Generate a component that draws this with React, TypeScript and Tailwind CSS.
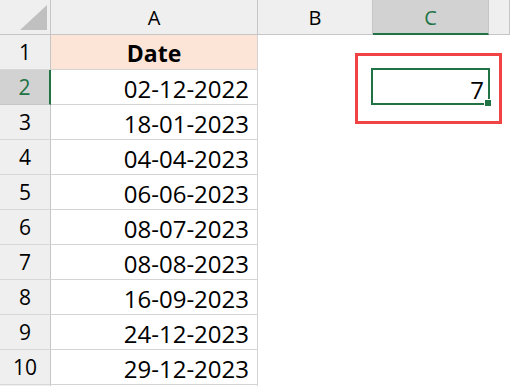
import React from "react";

const dates = [
  "02-12-2022",
  "18-01-2023",
  "04-04-2023",
  "06-06-2023",
  "08-07-2023",
  "08-08-2023",
  "16-09-2023",
  "24-12-2023",
  "29-12-2023",
];

const hdr = "bg-[#efefef] border-r border-b border-[#c6c6c6] flex items-end justify-center pb-[6px] text-[20px] leading-[20px] text-black";

export default function App() {
  const rows: React.ReactNode[] = [];
  for (let r = 1; r <= 11; r++) {
    const selected = r === 2;
    rows.push(
      <div
        key={`h${r}`}
        className={
          selected
            ? "bg-[#d2d2d2] border-b border-b-[#c6c6c6] border-r-2 border-r-[#217346] flex items-end justify-center pb-[6px] text-[21px] leading-[21px] text-[#217346]"
            : "bg-[#efefef] border-b border-b-[#d8d8d8] border-r border-r-[#c6c6c6] flex items-end justify-center pb-[6px] text-[21px] leading-[21px] text-black"
        }
      >
        {r <= 10 ? r : ""}
      </div>
    );
    if (r === 1) {
      rows.push(
        <div
          key={`a${r}`}
          className="bg-[#fce4d6] border-r border-b border-[#d4d4d4] flex items-end justify-center pb-[4px] text-[23px] leading-[24px] font-bold text-black"
        >
          Date
        </div>
      );
    } else if (r <= 10) {
      rows.push(
        <div
          key={`a${r}`}
          className="bg-white border-r border-b border-[#d4d4d4] flex items-end justify-end pr-[8px] pb-[3px] text-[24px] leading-[24px] text-black"
        >
          {dates[r - 2]}
        </div>
      );
    } else {
      rows.push(<div key={`a${r}`} className="bg-white border-r border-[#d4d4d4]" />);
    }
    rows.push(<div key={`b${r}`} className="bg-white" />);
    rows.push(
      <div
        key={`c${r}`}
        className="bg-white flex items-end justify-end pr-[5px] pb-[3px] text-[24px] leading-[24px] text-black"
      >
        {r === 2 ? "7" : ""}
      </div>
    );
    rows.push(<div key={`d${r}`} className="bg-white" />);
  }

  return (
    <div
      className="relative w-[510px] h-[386px] overflow-hidden bg-white"
      style={{ fontFamily: '"Open Sans", "Noto Sans", sans-serif' }}
    >
      <div className="grid grid-cols-[51px_207px_115px_116px_21px] auto-rows-[35px]">
        <div className="bg-[#efefef] border-r border-b border-[#c6c6c6] relative">
          <svg width="51" height="35" className="absolute left-0 top-0">
            <polygon points="20,30 47,30 47,5" fill="#c0c0c0" />
          </svg>
        </div>
        <div className={hdr}>A</div>
        <div className={hdr}>B</div>
        <div className="bg-[#d2d2d2] border-r border-r-[#c6c6c6] border-b-2 border-b-[#217346] flex items-end justify-center pb-[5px] text-[20px] leading-[20px] text-[#217346]">
          C
        </div>
        <div className={hdr}></div>
        {rows}
      </div>

      {/* Selected cell outline */}
      <div className="absolute left-[371px] top-[68px] w-[119px] h-[37px] border-2 border-[#217346]">
        <div className="absolute right-[-4px] bottom-[-4px] w-[6px] h-[6px] bg-[#217346] border border-white box-content" />
      </div>

      {/* Red highlight */}
      <div className="absolute left-[355px] top-[53px] w-[147px] h-[71px] border-[3px] border-[#f04343]" />
    </div>
  );
}
